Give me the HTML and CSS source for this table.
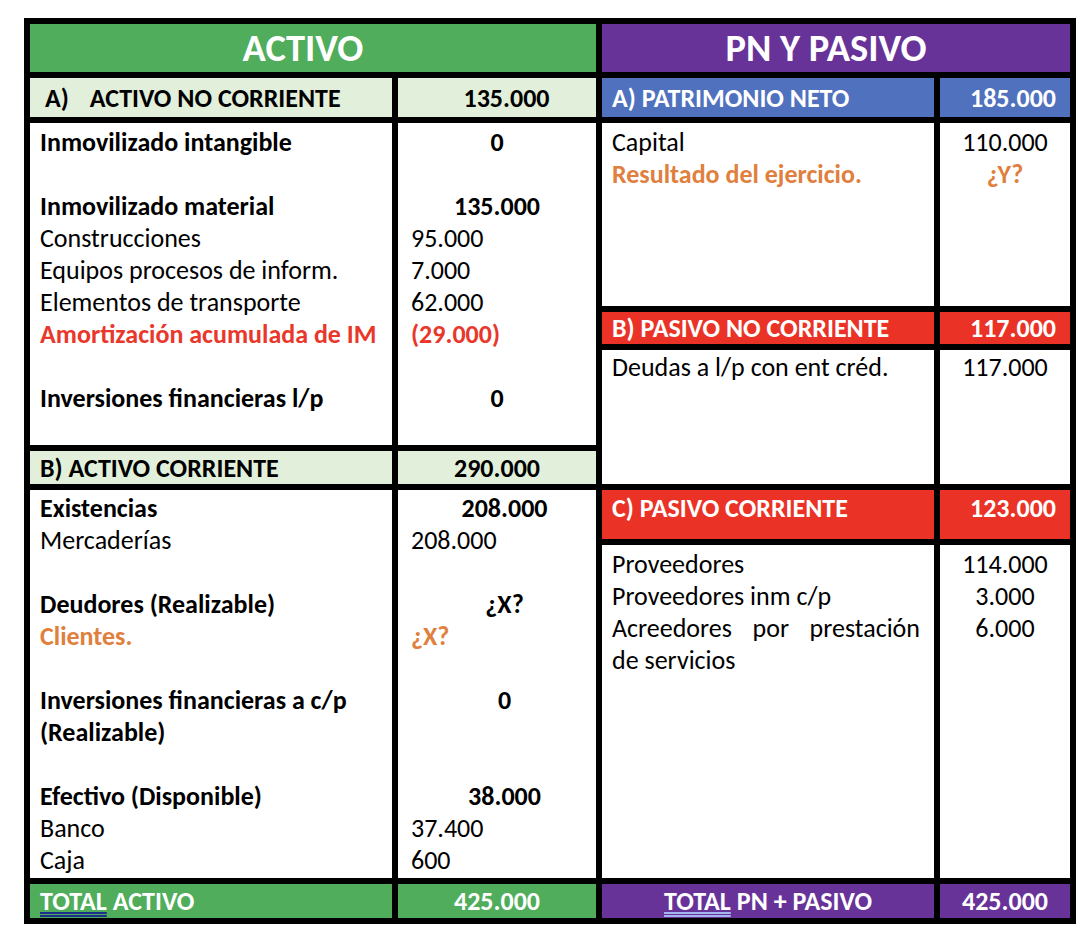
FILE: index.html
```html
<!DOCTYPE html>
<html lang="es">
<head>
<meta charset="utf-8">
<title>Balance</title>
<link rel="stylesheet" href="styles.css">
</head>
<body>
<div class="sheet">
  <section class="side side-left">
    <div class="head green">ACTIVO</div>

    <div class="sub light label label-a"><span class="tag">A)</span>ACTIVO NO CORRIENTE</div>
    <div class="sub light num center shift-a">135.000</div>

    <div class="cell lines label">
      <div class="ln b">Inmovilizado intangible</div>
      <div class="ln"></div>
      <div class="ln b">Inmovilizado material</div>
      <div class="ln">Construcciones</div>
      <div class="ln">Equipos procesos de inform.</div>
      <div class="ln">Elementos de transporte</div>
      <div class="ln b red">Amortización acumulada de IM</div>
      <div class="ln"></div>
      <div class="ln b">Inversiones financieras l/p</div>
    </div>
    <div class="cell lines vals">
      <div class="ln b center">0</div>
      <div class="ln"></div>
      <div class="ln b center">135.000</div>
      <div class="ln">95.000</div>
      <div class="ln">7.000</div>
      <div class="ln">62.000</div>
      <div class="ln b red">(29.000)</div>
      <div class="ln"></div>
      <div class="ln b center">0</div>
    </div>

    <div class="sub light label">B) ACTIVO CORRIENTE</div>
    <div class="sub light num center">290.000</div>

    <div class="cell lines label second">
      <div class="ln b">Existencias</div>
      <div class="ln">Mercaderías</div>
      <div class="ln"></div>
      <div class="ln b">Deudores (Realizable)</div>
      <div class="ln b orange">Clientes.</div>
      <div class="ln"></div>
      <div class="ln b">Inversiones financieras a c/p</div>
      <div class="ln b">(Realizable)</div>
      <div class="ln"></div>
      <div class="ln b">Efectivo (Disponible)</div>
      <div class="ln">Banco</div>
      <div class="ln">Caja</div>
    </div>
    <div class="cell lines vals second">
      <div class="ln b center shift">208.000</div>
      <div class="ln">208.000</div>
      <div class="ln"></div>
      <div class="ln b center shift">¿X?</div>
      <div class="ln b orange">¿X?</div>
      <div class="ln"></div>
      <div class="ln b center shift">0</div>
      <div class="ln"></div>
      <div class="ln"></div>
      <div class="ln b center shift">38.000</div>
      <div class="ln">37.400</div>
      <div class="ln">600</div>
    </div>

    <div class="total green label"><span class="dbl dbl-dark">TOTAL</span> ACTIVO</div>
    <div class="total green num center">425.000</div>
  </section>

  <section class="side side-right">
    <div class="head purple">PN Y PASIVO</div>

    <div class="sub blue label rlabel">A) PATRIMONIO NETO</div>
    <div class="sub blue num right">185.000</div>

    <div class="cell lines rlabel">
      <div class="ln">Capital</div>
      <div class="ln b orange">Resultado del ejercicio.</div>
    </div>
    <div class="cell lines">
      <div class="ln center">110.000</div>
      <div class="ln b orange center">¿Y?</div>
    </div>

    <div class="sub redbg label rlabel">B) PASIVO NO CORRIENTE</div>
    <div class="sub redbg num right">117.000</div>

    <div class="cell lines rlabel tight">
      <div class="ln">Deudas a l/p con ent créd.</div>
    </div>
    <div class="cell lines tight">
      <div class="ln center">117.000</div>
    </div>

    <div class="sub redbg label rlabel top">C) PASIVO CORRIENTE</div>
    <div class="sub redbg num right top">123.000</div>

    <div class="cell lines rlabel">
      <div class="ln">Proveedores</div>
      <div class="ln">Proveedores inm c/p</div>
      <p class="just">Acreedores por prestación de servicios</p>
    </div>
    <div class="cell lines">
      <div class="ln center">114.000</div>
      <div class="ln center">3.000</div>
      <div class="ln center">6.000</div>
    </div>

    <div class="total purple center"><span class="dbl dbl-light">TOTAL</span> PN + PASIVO</div>
    <div class="total purple num center">425.000</div>
  </section>
</div>
</body>
</html>
```

FILE: styles.css
```css
* {
  box-sizing: border-box;
}

body {
  margin: 0;
  padding: 18px 0 0 24px;
  background: #ffffff;
  font-family: "Carlito", "Lato", "Liberation Sans", sans-serif;
  font-size: 26px;
  color: #000000;
}

.sheet {
  display: flex;
  gap: 6px;
  width: 1052px;
  padding: 6px;
  background: #000000;
}

.side {
  display: grid;
  column-gap: 6px;
  row-gap: 6px;
}

.side-left {
  width: 566px;
  grid-template-columns: 362px 198px;
  grid-template-rows: 48px 39px 322px 33px 388px 34px;
}

.side-right {
  width: 468px;
  grid-template-columns: 332px 130px;
  grid-template-rows: 48px 39px 183px 32px 134px 49px 333px 34px;
}

.head {
  grid-column: 1 / -1;
  display: flex;
  align-items: center;
  justify-content: center;
  padding-right: 20px;
  color: #ffffff;
  font-weight: 700;
  font-size: 38.5px;
  line-height: 1;
}

.green { background: #4fad5b; color: #ffffff; }
.purple { background: #683399; color: #ffffff; }
.blue { background: #4f71be; color: #ffffff; }
.redbg { background: #ea3326; color: #ffffff; }
.light { background: #e2efda; }

.sub,
.total {
  display: flex;
  align-items: center;
  font-weight: 700;
  line-height: 32px;
  white-space: nowrap;
}

.sub.top {
  align-items: flex-start;
  padding-top: 2px;
}

.label { padding-left: 10px; }
.rlabel { padding-left: 10px; }

.label-a { padding-left: 15px; }
.label-a .tag { margin-right: 21px; }

.num { padding: 0 13px; }
.center { justify-content: center; text-align: center; }
.right { justify-content: flex-end; text-align: right; padding-right: 14px; }
.shift-a { padding-left: 32px; }

.cell {
  background: #ffffff;
}

.lines {
  padding-top: 3px;
}

.lines.second {
  padding-top: 2px;
}

.lines.tight {
  padding-top: 1px;
}

.vals {
  padding-left: 13px;
  padding-right: 13px;
}

.ln {
  height: 32px;
  line-height: 32px;
  white-space: nowrap;
}

.vals .ln.center {
  margin-left: -13px;
  margin-right: -13px;
}

.vals .ln.center.shift {
  padding-left: 15px;
}

.b { font-weight: 700; }
.red { color: #e9372b; }
.orange { color: #e07f3e; }

.just {
  margin: 0;
  padding-right: 14px;
  line-height: 32px;
  text-align: justify;
}

.dbl {
  text-decoration-line: underline;
  text-decoration-style: double;
  text-decoration-thickness: 1.5px;
  text-underline-offset: 2px;
  margin-right: 6px;
}

.dbl-dark { text-decoration-color: #1b2e8c; }
.dbl-light { text-decoration-color: #a3b4ef; }
```
